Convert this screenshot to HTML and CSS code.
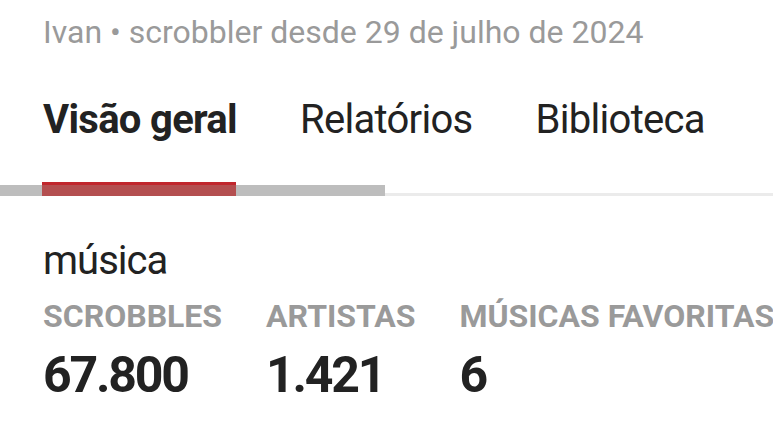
FILE: index.html
```html
<!DOCTYPE html>
<html lang="pt-BR">
<head>
<meta charset="utf-8">
<link rel="stylesheet" href="styles.css">
</head>
<body>
<div class="page">
  <p class="meta">Ivan • scrobbler desde 29 de julho de 2024</p>
  <nav class="tabs">
    <span class="tab tab-active">Visão geral</span>
    <span class="tab">Relatórios</span>
    <span class="tab">Biblioteca</span>
  </nav>
  <div class="track">
    <div class="track-thick"></div>
    <div class="track-thin"></div>
    <div class="indicator"></div>
  </div>
  <section class="stats">
    <h2 class="section-title">música</h2>
    <div class="stat-row">
      <div class="stat">
        <div class="stat-label">SCROBBLES</div>
        <div class="stat-value">67.800</div>
      </div>
      <div class="stat">
        <div class="stat-label">ARTISTAS</div>
        <div class="stat-value">1.421</div>
      </div>
      <div class="stat">
        <div class="stat-label">MÚSICAS FAVORITAS</div>
        <div class="stat-value">6</div>
      </div>
    </div>
  </section>
</div>
</body>
</html>
```

FILE: styles.css
```css
html, body {
  margin: 0;
  padding: 0;
  background: #ffffff;
}
body {
  font-family: Roboto, "Liberation Sans", sans-serif;
  width: 773px;
  height: 435px;
  overflow: hidden;
}
.page {
  padding-top: 12px;
}
.meta {
  margin: 0;
  padding-left: 43px;
  font-size: 32px;
  line-height: 40px;
  color: #9a9a9a;
  white-space: nowrap;
}
.tabs {
  display: flex;
  gap: 63px;
  padding-left: 43px;
  margin-top: 44px;
}
.tab {
  font-size: 40px;
  line-height: 48px;
  letter-spacing: -0.7px;
  color: #222222;
  white-space: nowrap;
}
.tab-active {
  font-weight: 700;
}
.track {
  position: relative;
  display: flex;
  align-items: flex-end;
  height: 14px;
  margin-top: 38px;
}
.track-thick {
  width: 385px;
  height: 11px;
  background: #bdbdbd;
}
.track-thin {
  flex: 1;
  height: 3px;
  background: #ebebeb;
}
.indicator {
  position: absolute;
  left: 42px;
  top: 0;
  width: 194px;
  height: 14px;
  background: linear-gradient(#c1272d 0 3px, #b44f50 3px);
}
.stats {
  padding-left: 43px;
  margin-top: 41px;
}
.section-title {
  margin: 0;
  font-size: 40px;
  line-height: 48px;
  letter-spacing: -1px;
  font-weight: 400;
  color: #222222;
}
.stat-row {
  display: flex;
  gap: 44px;
  margin-top: 11px;
}
.stat-label {
  font-size: 32px;
  line-height: 40px;
  font-weight: 700;
  color: #9a9a9a;
  white-space: nowrap;
}
.stat-value {
  margin-top: 11px;
  font-size: 50px;
  line-height: 56px;
  letter-spacing: -2.2px;
  font-weight: 700;
  color: #222222;
}
```
